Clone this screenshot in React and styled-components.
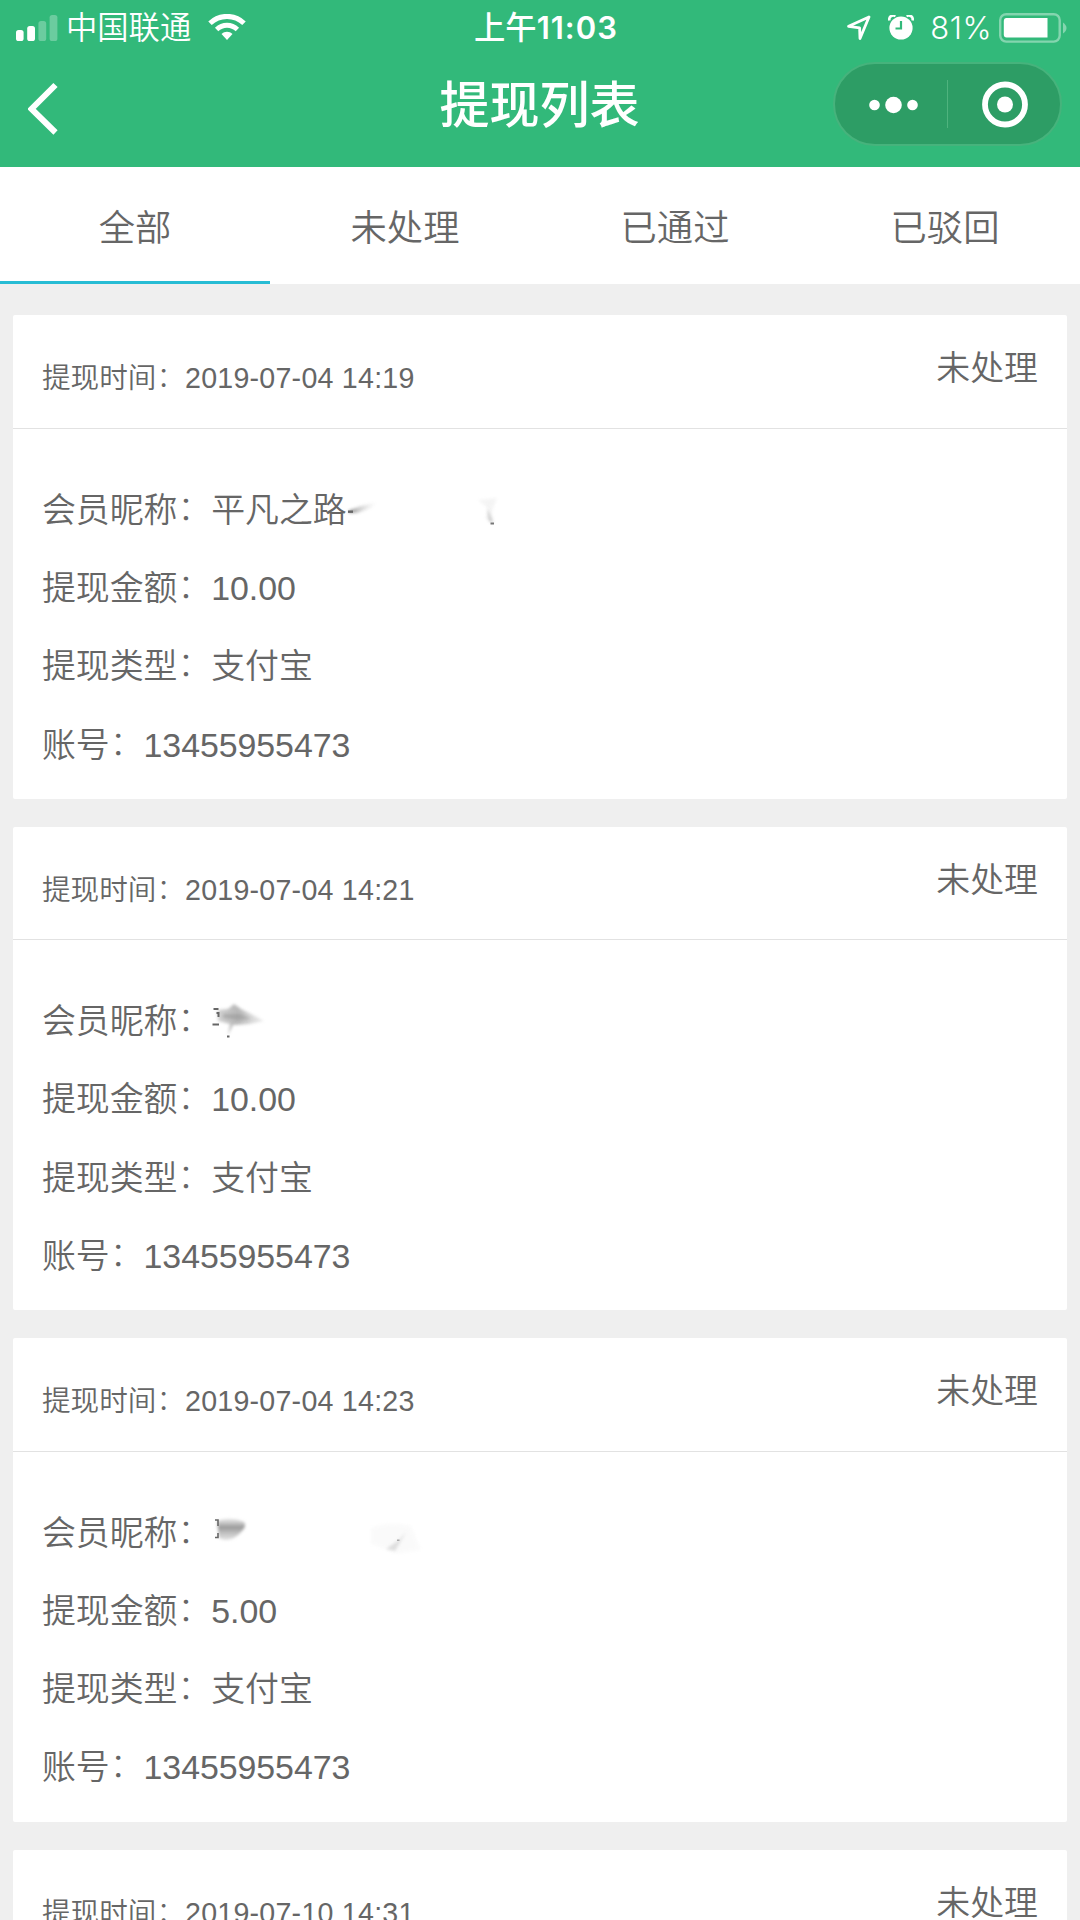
import styled, { createGlobalStyle } from 'styled-components'

const GlobalStyle = createGlobalStyle`
  * {
    box-sizing: border-box;
  }
  body {
    margin: 0;
    background: #efefef;
    color: #666;
    font-family: 'Liberation Sans', 'Noto Sans CJK SC', sans-serif;
    font-weight: 350;
  }
`

const Page = styled.div`
  width: 1080px;
  height: 1920px;
  overflow: hidden;
  background: #efefef;
`

const Header = styled.header`
  height: 167px;
  background: #32b97a;
  color: #fff;
`

const StatusBar = styled.div`
  height: 54px;
  padding: 0 13px 0 16px;
  display: grid;
  grid-template-columns: 1fr auto 1fr;
  align-items: center;
  font-family: 'Inter', 'Noto Sans CJK SC', sans-serif;
  font-size: 31.3px;
  line-height: 54px;
  svg{
    display: block;
  }
`

const StatusLeft = styled.div`
  display: flex;
  align-items: center;
`

const Carrier = styled.span`
  margin: 0 17px 0 8px;
  padding-top: 1px;
  font-weight: 350;
`

const Clock = styled.span`
  padding: 1px 0 0 9px;
  font-weight: 500;
  b{
    font-size: 31px;
    font-weight: 600;
    letter-spacing: 1px;
  }
`

const StatusRight = styled.div`
  display: flex;
  align-items: center;
  justify-content: flex-end;
`

const AlarmBox = styled.span`
  margin-left: 17px;
`

const Percent = styled.span`
  margin: 0 7px 0 16px;
  padding-top: 1px;
  font-size: 31px;
  font-weight: 350;
  letter-spacing: .5px;
`

const NavBar = styled.div`
  height: 113px;
  padding: 8px 18px 0 28px;
  display: grid;
  grid-template-columns: 1fr auto 1fr;
  align-items: start;
`

const Back = styled.button`
  padding: 20px 0 0;
  border: 0;
  background: none;
  text-align: left;
  svg{
    display: block;
  }
`

const Title = styled.h1`
  margin: 0;
  padding: 3px 11px 0 0;
  font-size: 50px;
  font-weight: 500;
  line-height: 82px;
`

const Capsule = styled.div`
  justify-self: end;
  display: flex;
  align-items: center;
  width: 229px;
  height: 84px;
  border: 2px solid #46b37c;
  border-radius: 42px;
  background: #2d9d65;
  svg{
    display: block;
  }
`

const CapsuleLine = styled.span`
  width: 1px;
  height: 48px;
  background: #4fb37e;
`

const Tabs = styled.nav`
  display: flex;
  height: 117px;
  background: #fff;
`

const Tab = styled.a`
  flex: 1;
  padding-top: 3px;
  text-align: center;
  font-size: 36.3px;
  line-height: 117px;
  border-bottom: 3px solid ${props => props.$active ? '#27bcd4' : 'transparent'};
`

const List = styled.main`
  display: flex;
  flex-direction: column;
  gap: 28px;
  padding: 31.4px 13px 0;
`

const Card = styled.section`
  flex: none;
  height: 483.4px;
  background: #fff;
  border-radius: 2px;
`

const CardHead = styled.div`
  display: flex;
  justify-content: space-between;
  height: 113.4px;
  padding: 0 29px;
  border-bottom: 1px solid #e2e2e2;
`

const Time = styled.span`
  padding-top: 10px;
  font-size: 28.6px;
  line-height: 106px;
`

const TimeValue = styled.span`
  letter-spacing: .24px;
`

const Status = styled.span`
  font-size: 33.9px;
  line-height: 106px;
`

const CardBody = styled.div`
  padding: 42px 29px 14px;
`

const Row = styled.div`
  display: flex;
  height: 78.3px;
  font-size: 33.9px;
  line-height: 78px;
  letter-spacing: -.05px;
  white-space: pre;
`

// full-width colon, thinner than the text next to it
const Colon = styled.span`
  font-weight: 300;
  vertical-align: .05em;
  line-height: 0;
`

const Smudge = styled.svg`
  display: block;
  height: 78px;
  overflow: visible;
`

const Label = ({ children }) => <span>{children}<Colon>：</Colon></span>

const SignalIcon = () => (
  <svg width="42" height="28" viewBox="0 0 42 28" fill="#fff">
    <rect x="0" y="16" width="7.6" height="11" rx="2.6" />
    <rect x="11.2" y="12" width="7.8" height="15" rx="2.6" />
    <rect x="22.4" y="7" width="7.8" height="20" rx="2.6" opacity=".28" />
    <rect x="33.6" y="1" width="7.8" height="26" rx="2.6" opacity=".28" />
  </svg>
)

const WifiIcon = () => (
  <svg width="38" height="28" viewBox="0 0 38 28" fill="none" stroke="#fff">
    <path d="M2 9.2C11.5 .1 26.5 .1 36 9.2" strokeWidth="5" />
    <path d="M8.6 15.500C14.6 9.8 23.4 9.8 29.4 15.500" strokeWidth="4.8" />
    <path d="M13.5 20C16.800 17 21.200 17 24.5 20L19 26Z" fill="#fff" stroke="none" />
  </svg>
)

const LocationIcon = () => (
  <svg width="24" height="26" viewBox="0 0 24 26" fill="none" stroke="#fff" strokeWidth="2.8" strokeLinejoin="round">
    <path d="M22 2L1.6 11.3L12.6 12.9L13 23.5Z" />
  </svg>
)

const AlarmIcon = () => (
  <svg width="26" height="26" viewBox="0 0 26 26">
    <path d="M1.5 5.5C.5 2 3.5 -.5 7.5 .9M24.5 5.5C25.5 2 22.5 -.5 18.5 .9" fill="none" stroke="#fff" strokeWidth="2.6" />
    <circle cx="13" cy="13" r="11.6" fill="#fff" />
    <path d="M13 6V13.5H7.5" fill="none" stroke="#32b97a" strokeWidth="2.2" />
  </svg>
)

const BatteryIcon = () => (
  <svg width="68" height="30" viewBox="0 0 68 30" fill="#fff">
    <rect x="1.2" y="1.2" width="59.5" height="27.4" rx="6" fill="none" stroke="#fff" strokeWidth="2.4" opacity=".4" />
    <path d="M7.5 5H48.5V24.5H7.5Q4.8 24.5 4.8 21.5V8Q4.8 5 7.5 5Z" />
    <path d="M64 9.5Q67.5 12 67.5 15T64 20.5Z" opacity=".4" />
  </svg>
)

const smudges = [
  <Smudge key="a" width="200" viewBox="0 0 200 78">
    <defs>
      <linearGradient id="fade" x1="0" x2="1" y1="0" y2="0">
        <stop offset="0" stopColor="#666" />
        <stop offset=".3" stopColor="#888" stopOpacity=".6" />
        <stop offset="1" stopColor="#ccc" stopOpacity="0" />
      </linearGradient>
      <filter id="soft" x="-50%" y="-50%" width="200%" height="200%"><feGaussianBlur stdDeviation="1.6" /></filter>
    </defs>
    <path d="M2 39.5L14 35L30 31L24 37L10 42L2 42Z" fill="url(#fade)" opacity=".8" filter="url(#soft)" />
    <rect x="1" y="39.5" width="5" height="2.4" fill="#666" />
    <path d="M131 29L150 27L145 40L147 52L138 47L142 38Z" fill="#ddd" opacity=".3" filter="url(#soft)" />
    <path d="M140 36L146 52L142 50Z" fill="#aaa" opacity=".6" filter="url(#soft)" />
    <rect x="143.5" y="51.5" width="3.5" height="2" fill="#777" />
  </Smudge>,
  <Smudge key="b" width="60" viewBox="0 0 60 78">
    <defs>
      <linearGradient id="fadeB" x1="0" x2="1" y1="0" y2="0">
        <stop offset="0" stopColor="#888" stopOpacity=".5" />
        <stop offset=".45" stopColor="#999" />
        <stop offset="1" stopColor="#ccc" stopOpacity=".5" />
      </linearGradient>
    </defs>
    <path d="M6 28L17 27L23 22L30 27L40 32L53 39L38 42L22 43L17 53L19 42L7 39Z" fill="url(#fadeB)" opacity=".7" filter="url(#soft)" />
    <path d="M12 32L30 32L40 37L28 38L12 36Z" fill="#888" opacity=".4" filter="url(#soft)" />
    <path d="M2.5 27H7.5M5.5 31H7.5V35M1.5 42.5H8M16 54.5H18.5" fill="none" stroke="#666" strokeWidth="2" />
  </Smudge>,
  <Smudge key="c" width="220" viewBox="0 0 220 78">
    <defs>
      <linearGradient id="fadeC" x1="0" x2="0" y1="0" y2="1">
        <stop offset="0" stopColor="#ccc" stopOpacity=".5" />
        <stop offset=".4" stopColor="#999" />
        <stop offset="1" stopColor="#ccc" stopOpacity=".6" />
      </linearGradient>
    </defs>
    <path d="M6 27Q20 22 33 28Q36 32 31 37Q20 50 8 44Z" fill="url(#fadeC)" filter="url(#soft)" />
    <path d="M4 26H7V32M4 43.5H7V39" fill="none" stroke="#666" strokeWidth="1.6" />
    <path d="M160 34Q178 26 200 32L210 56L186 60L160 50Z" fill="#eee" opacity=".25" filter="url(#soft)" />
    <path d="M195 38L184 57L175 55L188 46Z" fill="#ccc" opacity=".6" filter="url(#soft)" />
    <rect x="186" y="45.5" width="2.5" height="1.5" fill="#aaa" />
  </Smudge>,
]

const records = [
  { time: '2019-07-04 14:19', name: '平凡之路', amount: '10.00' },
  { time: '2019-07-04 14:21', name: '', amount: '10.00' },
  { time: '2019-07-04 14:23', name: '', amount: '5.00' },
  { time: '2019-07-10 14:31' },
]

const tabs = ['全部', '未处理', '已通过', '已驳回']

export default function App() {
  return (
    <Page>
      <GlobalStyle />
      <Header>
        <StatusBar>
          <StatusLeft>
            <SignalIcon />
            <Carrier>中国联通</Carrier>
            <WifiIcon />
          </StatusLeft>
          <Clock>上午<b>11:03</b></Clock>
          <StatusRight>
            <LocationIcon />
            <AlarmBox><AlarmIcon /></AlarmBox>
            <Percent>81%</Percent>
            <BatteryIcon />
          </StatusRight>
        </StatusBar>

        <NavBar>
          <Back>
            <svg width="31" height="54" viewBox="0 0 31 54" fill="none" stroke="#fff" strokeWidth="6">
              <path d="M27.5 3L3.5 27L27.5 50.5" />
            </svg>
          </Back>
          <Title>提现列表</Title>
          <Capsule>
            <svg width="112" height="80" viewBox="0 0 112 80" fill="#fff">
              <circle cx="39.5" cy="41" r="5.3" />
              <circle cx="58.5" cy="41" r="8.3" />
              <circle cx="77.5" cy="41" r="5.3" />
            </svg>
            <CapsuleLine />
            <svg width="112" height="80" viewBox="0 0 112 80">
              <circle cx="57" cy="40.5" r="20" fill="none" stroke="#fff" strokeWidth="5.8" />
              <circle cx="57" cy="40.5" r="8" fill="#fff" />
            </svg>
          </Capsule>
        </NavBar>
      </Header>

      <Tabs>
        {tabs.map((tab, i) => <Tab key={tab} $active={i === 0}>{tab}</Tab>)}
      </Tabs>

      <List>
        {records.map((item, i) => (
          <Card key={item.time}>
            <CardHead>
              <Time><Label>提现时间</Label><TimeValue>{item.time}</TimeValue></Time>
              <Status>未处理</Status>
            </CardHead>
            {item.amount && (
              <CardBody>
                <Row><Label>会员昵称</Label>{item.name}{smudges[i]}</Row>
                <Row><Label>提现金额</Label>{item.amount}</Row>
                <Row><Label>提现类型</Label>支付宝</Row>
                <Row><Label>账号</Label>13455955473</Row>
              </CardBody>
            )}
          </Card>
        ))}
      </List>
    </Page>
  )
}
